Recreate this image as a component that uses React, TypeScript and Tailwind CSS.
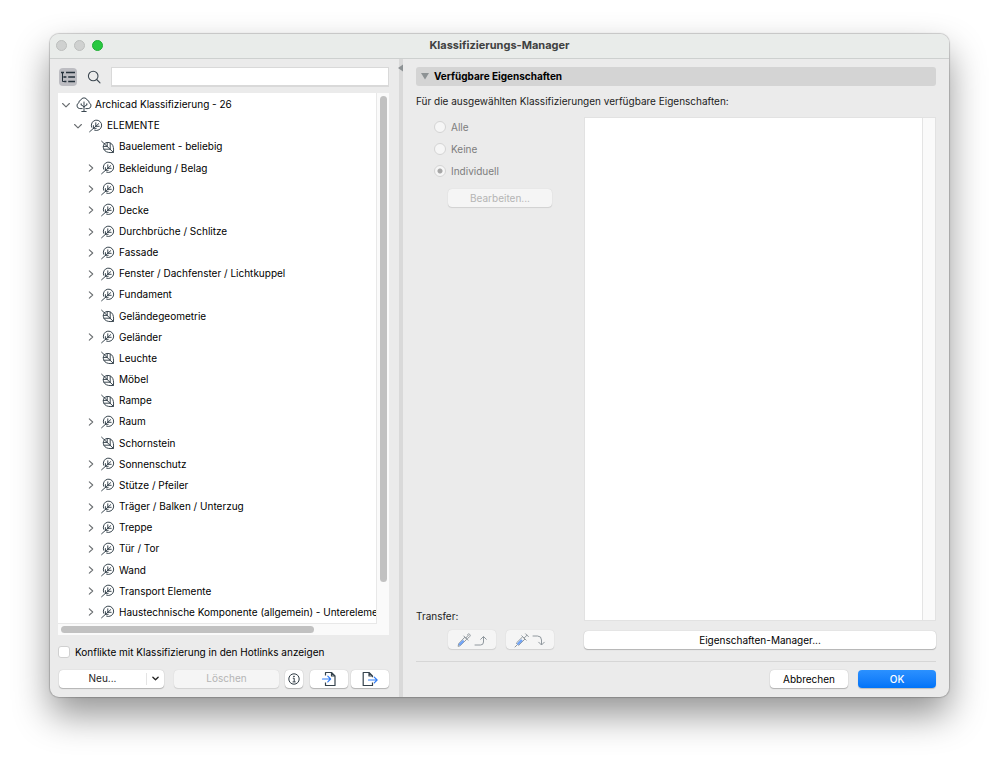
import type { ReactNode } from 'react'

type Kind = 'tree' | 'branch' | 'leaf'

type Item = {
  label: string
  kind: Kind
  level: 0 | 1 | 2
}

const items: Item[] = [
  { label: 'Archicad Klassifizierung - 26', kind: 'tree', level: 0 },
  { label: 'ELEMENTE', kind: 'branch', level: 1 },
  { label: 'Bauelement - beliebig', kind: 'leaf', level: 2 },
  { label: 'Bekleidung / Belag', kind: 'branch', level: 2 },
  { label: 'Dach', kind: 'branch', level: 2 },
  { label: 'Decke', kind: 'branch', level: 2 },
  { label: 'Durchbrüche / Schlitze', kind: 'branch', level: 2 },
  { label: 'Fassade', kind: 'branch', level: 2 },
  { label: 'Fenster / Dachfenster / Lichtkuppel', kind: 'branch', level: 2 },
  { label: 'Fundament', kind: 'branch', level: 2 },
  { label: 'Geländegeometrie', kind: 'leaf', level: 2 },
  { label: 'Geländer', kind: 'branch', level: 2 },
  { label: 'Leuchte', kind: 'leaf', level: 2 },
  { label: 'Möbel', kind: 'leaf', level: 2 },
  { label: 'Rampe', kind: 'leaf', level: 2 },
  { label: 'Raum', kind: 'branch', level: 2 },
  { label: 'Schornstein', kind: 'leaf', level: 2 },
  { label: 'Sonnenschutz', kind: 'branch', level: 2 },
  { label: 'Stütze / Pfeiler', kind: 'branch', level: 2 },
  { label: 'Träger / Balken / Unterzug', kind: 'branch', level: 2 },
  { label: 'Treppe', kind: 'branch', level: 2 },
  { label: 'Tür / Tor', kind: 'branch', level: 2 },
  { label: 'Wand', kind: 'branch', level: 2 },
  { label: 'Transport Elemente', kind: 'branch', level: 2 },
  { label: 'Haustechnische Komponente (allgemein) - Unterelemente', kind: 'branch', level: 2 },
]

const indent = ['pl-1', 'pl-4', 'pl-7']

function TreeIcon() {
  return (
    <svg className="h-4 w-4 shrink-0" viewBox="0 0 16 16" fill="none" stroke="#3a4750" strokeWidth="1" strokeLinecap="round" strokeLinejoin="round">
      <path d="M6.200 11.600H3.800A3 3 0 0 1 2.900 5.800A2.300 2.300 0 0 1 4.700 3.200A3.500 3.500 0 0 1 11.300 3.200A2.300 2.300 0 0 1 13.100 5.800A3 3 0 0 1 12.200 11.600H9.800" />
      <path d="M8 14.500V5M8 9.800L5.200 7.800M8 9.800L10.800 7.800M5.200 7.800V6.800M10.800 7.800V6.800M5.800 14.500H10.200" />
    </svg>
  )
}

function BranchIcon() {
  return (
    <svg className="h-4 w-4 shrink-0" viewBox="0 0 16 16" fill="none" stroke="#3a4750" strokeWidth="1" strokeLinecap="round" strokeLinejoin="round">
      <path d="M3.600 9.200A5.200 5.200 0 1 1 6.600 12.200" />
      <path d="M1.600 13.800L10.800 5.600M7.800 8.200V4.800M5.400 10.400V7.600M5.600 10.300H8.200M7.900 8.300H11.200" />
    </svg>
  )
}

function LeafIcon() {
  return (
    <svg className="h-4 w-4 shrink-0" viewBox="0 0 16 16" fill="none" stroke="#3a4750" strokeWidth="1" strokeLinecap="round" strokeLinejoin="round">
      <path d="M4.400 4.600C6.400 2.900 9.600 3 11.600 4.800C13.600 6.800 13.800 10 13.400 13.400C10 13.800 7 13.600 5 11.800C2.900 9.700 2.700 6.800 4.400 4.600Z" />
      <path d="M1.600 2.200L13.400 13.400M7.200 7.400V3.500M7.200 7.400H3.300M10.200 10.200V4.200M10.200 10.200H4" />
    </svg>
  )
}

function Chevron({ open }: { open: boolean }) {
  return (
    <svg className="h-2 w-2" viewBox="0 0 8 8" fill="none" stroke="#6b6f72" strokeWidth="1.1" strokeLinecap="round" strokeLinejoin="round">
      <path d={open ? 'M.6 2.500L4 5.900L7.400 2.500' : 'M2.300 .8L5.700 4L2.300 7.200'} />
    </svg>
  )
}

const icons = { tree: TreeIcon, branch: BranchIcon, leaf: LeafIcon }

function TreeRow({ item }: { item: Item }) {
  const Icon = icons[item.kind]
  return (
    <li className={`flex min-h-5 flex-1 items-center text-black ${indent[item.level]}`}>
      {item.kind === 'leaf' ? (
        <span className="w-[14px] shrink-0" />
      ) : (
        <button
          type="button"
          aria-label={`${item.label} umschalten`}
          className={`flex h-4 w-[14px] shrink-0 items-center ${item.level === 2 ? 'pl-[1px]' : ''}`}
        >
          <Chevron open={item.level < 2} />
        </button>
      )}
      <Icon />
      <span className="ml-[3px] whitespace-nowrap">{item.label}</span>
    </li>
  )
}

const raised = 'flex items-center justify-center rounded-[4px] bg-white shadow-[0_1px_1px_rgba(0,0,0,0.22),0_0_1px_rgba(0,0,0,0.25)]'
const dimmed = 'flex items-center justify-center rounded-[4px] bg-[#f5f5f5] text-[#b4b4b4] shadow-[0_1px_1px_rgba(0,0,0,0.1),0_0_1px_rgba(0,0,0,0.15)]'

function Radio({ label, checked = false }: { label: string; checked?: boolean }) {
  return (
    <label className="flex h-[22px] items-center gap-[5px] text-[#7d7d7d]">
      <input
        type="radio"
        name="scope"
        disabled
        defaultChecked={checked}
        className="h-3 w-3 appearance-none rounded-full border border-[#d4d4d4] bg-[#f6f6f6] checked:bg-[radial-gradient(circle,#a6a6a6_2px,#f6f6f6_3px)]"
      />
      {label}
    </label>
  )
}

function TransferButton({ label, children }: { label: string; children: ReactNode }) {
  return (
    <button type="button" disabled aria-label={label} className={`${dimmed} h-[19px] w-12`}>
      <svg className="h-4 w-9" viewBox="0 0 36 16" fill="none" stroke="#90989e" strokeWidth="1" strokeLinecap="round" strokeLinejoin="round">
        {children}
      </svg>
    </button>
  )
}

function LeftPane() {
  return (
    <section className="flex w-[349px] shrink-0 flex-col px-2 pt-2 pb-[9px]">
      <div className="flex h-5 items-center pr-[2px] pl-[1px]">
        <button type="button" aria-label="Baumansicht" className="flex h-[18px] w-[18px] items-center justify-center rounded-[4px] bg-[#bdbdc2]">
          <svg className="h-4 w-4" viewBox="0 0 16 16" fill="none" stroke="#25313b">
            <path d="M2.500 4V12.500M2.500 8H5M2.500 12.500H5" strokeWidth="1" />
            <path d="M1 3.500H4M6 3.500H15M4.200 8H6.400M8.200 8H15M4.200 12.500H6.400M8.200 12.500H15" strokeWidth="1.700" />
          </svg>
        </button>
        <button type="button" aria-label="Suchen" className="ml-2 flex h-[18px] w-[18px] items-center justify-center">
          <svg className="h-[14px] w-[14px]" viewBox="0 0 14 14" fill="none" stroke="#3c4750" strokeWidth="1.100" strokeLinecap="round">
            <circle cx="6.200" cy="6" r="4.800" />
            <path d="M9.700 9.500L13 12.800" />
          </svg>
        </button>
        <input
          type="text"
          aria-label="Suchbegriff"
          className="ml-2 h-5 min-w-0 flex-1 border border-b-2 border-[#d9d9d9] bg-white px-1 outline-none"
        />
      </div>

      <div className="mt-[6px] mr-[2px] flex flex-1 flex-col bg-[#fafafa]">
        <div className="flex flex-1">
          <ul className="flex min-w-0 flex-1 flex-col overflow-hidden border-r border-b border-[#e8e8e8] bg-white pt-[1px]">
            {items.map((item) => (
              <TreeRow key={item.label} item={item} />
            ))}
          </ul>
          <div className="flex w-3 flex-col items-center pt-[3px]">
            <div className="h-[92%] w-[7px] rounded-full bg-[#c1c1c1]" />
          </div>
        </div>
        <div className="flex h-[11px] items-center pl-[3px]">
          <div className="h-[7px] w-[77%] rounded-full bg-[#c1c1c1]" />
        </div>
      </div>

      <label className="mt-[10px] flex h-[14px] items-center gap-[5px] text-black">
        <input type="checkbox" className="h-3 w-3 appearance-none rounded-[3px] border border-[#d0d0d0] bg-white" />
        Konflikte mit Klassifizierung in den Hotlinks anzeigen
      </label>

      <div className="mt-[10px] flex h-[19px] items-center pl-[1px]">
        <button type="button" className={`${raised} h-[18px] w-[105px]`}>
          <span className="flex-1 text-center">Neu...</span>
          <span className="flex h-3 w-[18px] items-center justify-center border-l border-[#e4e4e4]">
            <svg className="h-[7px] w-[7px]" viewBox="0 0 8 8" fill="none" stroke="#222" strokeWidth="1.500" strokeLinecap="round" strokeLinejoin="round">
              <path d="M1 2.500L4 5.500L7 2.500" />
            </svg>
          </span>
        </button>
        <button type="button" disabled className={`${dimmed} ml-[10px] h-[18px] w-[105px]`}>
          Löschen
        </button>
        <button type="button" aria-label="Info" className={`${raised} ml-[6px] h-[18px] w-[18px]`}>
          <svg className="h-3 w-3" viewBox="0 0 12 12" fill="none" stroke="#2f3b44" strokeWidth="1">
            <circle cx="6" cy="6" r="5.200" />
            <path d="M4.800 5.200H6.200V8.800M4.600 8.900H7.600" />
            <circle cx="6" cy="3.300" r=".4" fill="#2f3b44" />
          </svg>
        </button>
        <button type="button" aria-label="Importieren" className={`${raised} ml-[7px] h-[18px] w-[38px]`}>
          <svg className="h-4 w-4" viewBox="0 0 16 16" fill="none" stroke="#34424c" strokeWidth="1.200" strokeLinejoin="round">
            <path d="M4.500 4.500V1.500H10.500L14 5V14.500H4.500V11.500M10.500 1.500V5H14" />
            <path d="M1.500 8H9.500M6.800 5.200L9.600 8L6.800 10.800" stroke="#2f7cf6" strokeLinecap="round" />
          </svg>
        </button>
        <button type="button" aria-label="Exportieren" className={`${raised} ml-[3px] h-[18px] w-[38px]`}>
          <svg className="h-4 w-4" viewBox="0 0 16 16" fill="none" stroke="#34424c" strokeWidth="1.200" strokeLinejoin="round">
            <path d="M10.500 6.200V5L7 1.500H1.200V14.500H10.500V11.500M7 1.500V5H10.500" />
            <path d="M6.500 9H15M12.300 6.200L15.100 9L12.300 11.800" stroke="#2f7cf6" strokeLinecap="round" />
          </svg>
        </button>
      </div>
    </section>
  )
}

function RightPane() {
  return (
    <section className="flex min-w-0 flex-1 flex-col pt-2 pr-[13px] pb-[9px] pl-[13px]">
      <h2 className="flex h-[19px] shrink-0 items-center gap-[5px] rounded-[3px] bg-[#d4d4d4] pl-[5px] font-bold text-black">
        <svg className="h-2 w-2" viewBox="0 0 8 8" fill="#8d9294">
          <path d="M0 0H8L4 6.500Z" />
        </svg>
        Verfügbare Eigenschaften
      </h2>
      <p className="mt-[7px] h-4 leading-4">Für die ausgewählten Klassifizierungen verfügbare Eigenschaften:</p>

      <div className="mt-2 flex flex-1">
        <div className="flex w-[168px] shrink-0 flex-col">
          <div className="-mt-px pl-[18px]">
            <Radio label="Alle" />
            <Radio label="Keine" />
            <Radio label="Individuell" checked />
          </div>
          <button type="button" disabled className={`${dimmed} mt-[7px] ml-8 h-[18px] w-[104px]`}>
            Bearbeiten...
          </button>
          <div className="mt-auto">
            <p className="h-4 leading-4">Transfer:</p>
            <div className="mt-[6px] ml-8 flex gap-[10px]">
              <TransferButton label="Eigenschaften aufnehmen">
                <path d="M4.200 14L4.600 11.800L10.800 5.200L12.800 7.200L6.400 13.500ZM9.800 4L14 8.200M12 5.800L14.300 3.300M13.600 2.400A1.400 1.400 0 0 1 15.800 4.400L13.600 6.600" />
                <path d="M5.800 12.400L9 9.200" stroke="#6fa3f7" strokeWidth="2.200" />
                <path d="M21 13H26.500A3 3 0 0 0 29.500 10V5M26.700 7.300L29.500 4.500L32.300 7.300" />
              </TransferButton>
              <TransferButton label="Eigenschaften übertragen">
                <path d="M3 15L5.200 12.800M4.600 11.400L6.600 13.400L13 7L11 5ZM9.800 3.800L14.200 8.200M12.200 6L15 3.200M13.600 1.800L16.400 4.600" />
                <path d="M6.200 11.800L9.400 8.600" stroke="#6fa3f7" strokeWidth="2.200" />
                <path d="M21 4H25.500A4 4 0 0 1 29.500 8V12.500M26.700 10.200L29.500 13L32.300 10.200" />
              </TransferButton>
            </div>
          </div>
        </div>

        <div className="flex min-w-0 flex-1 flex-col">
          <div className="mb-[10px] flex flex-1 justify-end border border-[#e2e2e2] bg-white">
            <div className="w-[13px] border-l border-[#e4e4e4] bg-[#fafafa]" />
          </div>
          <button type="button" className={`${raised} h-[18px] w-full text-black`}>
            Eigenschaften-Manager...
          </button>
        </div>
      </div>

      <div className="mt-3 flex justify-end gap-[10px] border-t border-[#d6d6d6] pt-2">
        <button type="button" className={`${raised} h-[18px] w-[78px] text-black`}>
          Abbrechen
        </button>
        <button
          type="button"
          className="h-[18px] w-[78px] rounded-[4px] bg-gradient-to-b from-[#2b91ff] to-[#0073f8] font-medium text-white shadow-[0_1px_1px_rgba(0,0,0,0.2)]"
        >
          OK
        </button>
      </div>
    </section>
  )
}

export default function App() {
  return (
    <main className="flex min-h-screen bg-white px-[50px] pt-[34px] pb-[66px] font-['Inter',sans-serif] text-[10px] text-[#1c1c1c]">
      <div className="flex flex-1 flex-col overflow-hidden rounded-[9px] bg-[#ebebeb] shadow-[0_0_1px_1px_rgba(0,0,0,0.18),0_18px_36px_rgba(0,0,0,0.42)]">
        <header className="grid h-[25px] shrink-0 grid-cols-[1fr_auto_1fr] items-center border-b border-[#cdd0cf] bg-[#e9ecea] px-[6px] pb-[1px]">
          <div className="flex gap-[7px]">
            <button type="button" aria-label="Schließen" className="h-[11px] w-[11px] rounded-full border border-[#bcbebd] bg-[#cfd1d0]" />
            <button type="button" aria-label="Minimieren" className="h-[11px] w-[11px] rounded-full border border-[#bcbebd] bg-[#cfd1d0]" />
            <button type="button" aria-label="Zoomen" className="h-[11px] w-[11px] rounded-full border border-[#1fae35] bg-[#28c840]" />
          </div>
          <h1 className="text-[11px] font-bold text-[#404141]">Klassifizierungs-Manager</h1>
        </header>
        <div className="flex flex-1">
          <LeftPane />
          <div className="flex w-1 shrink-0 justify-end bg-[#d9d9d9] pt-[5px]">
            <svg className="h-2 w-[5px] shrink-0" viewBox="0 0 5 8" fill="#8d9294">
              <path d="M5 .5V7.500L0 4Z" />
            </svg>
          </div>
          <RightPane />
        </div>
      </div>
    </main>
  )
}
